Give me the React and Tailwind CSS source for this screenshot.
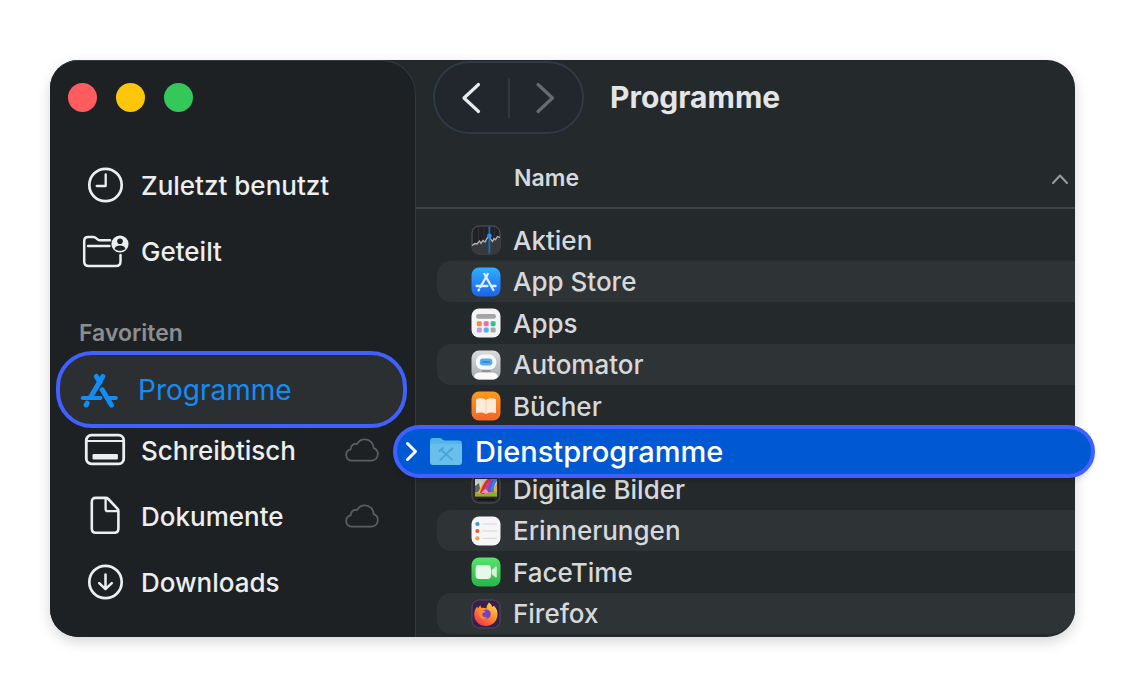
import React, { useState } from "react";

/* ---------- sidebar icons ---------- */

function ClockIcon() {
  return (
    <svg className="w-[50px] h-10 shrink-0" viewBox="0 0 50 40" fill="none" stroke="currentColor">
      <circle cx="25.5" cy="20" r="16.2" strokeWidth="2.7" />
      <path d="M25.7 9.5V21H16.7" strokeWidth="2.3" strokeLinecap="round" strokeLinejoin="round" />
    </svg>
  );
}

function SharedFolderIcon() {
  return (
    <svg className="w-[50px] h-10 shrink-0" viewBox="0 0 50 40" fill="none" stroke="currentColor">
      <path
        d="M30 9.2H19.5C17.2 9.2 16 6 13.5 6H8.2C5.5 6 4.2 7.4 4.2 10V30.5C4.2 33.6 5.6 35 8.7 35H36C39.1 35 40.5 33.6 40.5 30.5V24"
        strokeWidth="2.5"
        strokeLinecap="round"
      />
      <path d="M8 15H29.5" strokeWidth="2.4" strokeLinecap="round" />
      <circle cx="40" cy="13" r="8.6" fill="currentColor" stroke="none" />
      <circle cx="40" cy="10.3" r="2.8" fill="#1d2124" stroke="none" />
      <path d="M34.6 18C35.2 15.6 37.2 14.6 40 14.6S44.8 15.6 45.4 18C42.5 20.4 37.5 20.4 34.6 18Z" fill="#1d2124" stroke="none" />
    </svg>
  );
}

function ProgramsIcon() {
  return (
    <svg className="w-[50px] h-10 shrink-0" viewBox="0 0 50 40" fill="none" stroke="currentColor" strokeLinecap="round">
      <path d="M28.8 6.5L16.4 27.5M12.2 35L13.2 33.2" strokeWidth="5" />
      <path d="M22.4 6.5L26 12.4M28.2 19.8L37.4 35" strokeWidth="5" />
      <path d="M8.8 28H26.4M35.6 28H41.8" strokeWidth="4.2" />
    </svg>
  );
}

function DesktopIcon() {
  return (
    <svg className="w-[50px] h-10 shrink-0" viewBox="0 0 50 40" fill="none" stroke="currentColor">
      <rect x="6.3" y="5.2" width="37.4" height="28.6" rx="5" strokeWidth="2.8" />
      <path d="M7 11H43" strokeWidth="2" />
      <rect x="12.5" y="24" width="25.4" height="5.4" rx="1" fill="currentColor" stroke="none" />
    </svg>
  );
}

function DocumentIcon() {
  return (
    <svg className="w-[50px] h-10 shrink-0" viewBox="0 0 50 40" fill="none" stroke="currentColor" strokeWidth="2.6" strokeLinejoin="round">
      <path d="M15.8 1.9H25.6C26.8 1.9 27.5 2.2 28.3 3L37.4 12.6C38.2 13.4 38.4 14.1 38.4 15.2V32.6C38.4 35.6 37 36.8 34.4 36.8H15.8C13 36.8 11.8 35.6 11.8 32.6V6C11.8 3.2 13 1.9 15.8 1.9Z" />
      <path d="M25.6 2.6V13C25.6 14.4 26.2 15.2 27.8 15.2H38" strokeWidth="2.3" />
    </svg>
  );
}

function DownloadIcon() {
  return (
    <svg className="w-[50px] h-10 shrink-0" viewBox="0 0 50 40" fill="none" stroke="currentColor" strokeLinecap="round" strokeLinejoin="round">
      <circle cx="25.5" cy="20" r="16.2" strokeWidth="2.7" />
      <path d="M25.5 12.4V27M19.2 21.2L25.5 27.2L31.8 21.2" strokeWidth="2.5" />
    </svg>
  );
}

function CloudIcon() {
  return (
    <svg className="w-[34px] h-6 shrink-0 text-[#5b5e61]" viewBox="0 0 34 24" fill="none" stroke="currentColor" strokeWidth="1.8" strokeLinejoin="round">
      <path d="M7.4 22.6C3.6 22.6 1.2 20.2 1.2 17C1.2 14.2 3 12 5.7 11.4C5.5 7.6 8.8 5.2 12 6.2C13.6 3.2 16.4 1.4 19.8 1.4C24.8 1.4 28.6 5.2 28.7 10.2C31.2 11 32.8 13.2 32.8 16C32.8 19.8 30.2 22.6 26.4 22.6Z" />
    </svg>
  );
}

/* ---------- app icons ---------- */

function StocksIcon() {
  return (
    <svg className="size-[30px] shrink-0" viewBox="0 0 30 30" fill="none">
      <rect x="1" y="1" width="28" height="28" rx="7" fill="#222224" stroke="#55585b" />
      <path d="M7.5 2V28M13 2V28M23.5 2V28" stroke="#333336" strokeWidth="0.8" />
      <path d="M1 20.5L4 18.5L6 19L8.5 16L10 18.4L12 15.5L14 17L16.2 13L18 11.5L19.5 14L21.5 16.5L23 13.5L24.5 14.8L26.5 11.5L29 12.5V23C29 26.5 27 29 23 29H7C3 29 1 26.5 1 23Z" fill="#37393b" />
      <path d="M1 20.5L4 18.5L6 19L8.5 16L10 18.4L12 15.5L14 17L16.2 13L18 11.5L19.5 14L21.5 16.5L23 13.5L24.5 14.8L26.5 11.5L29 12.5" stroke="#b4b7b9" strokeWidth="1.3" />
      <path d="M18.4 1.5V28.5" stroke="#1272c4" strokeWidth="1.8" />
      <circle cx="18.4" cy="11" r="2.4" fill="#2492ee" />
    </svg>
  );
}

function AppStoreIcon() {
  return (
    <svg className="size-[30px] shrink-0" viewBox="0 0 30 30" fill="none">
      <defs>
        <linearGradient id="appstore" x1="0" y1="0" x2="0" y2="1">
          <stop stopColor="#2fb0fb" />
          <stop offset="1" stopColor="#1c62ee" />
        </linearGradient>
      </defs>
      <rect x="0.5" y="0.5" width="29" height="29" rx="7.5" fill="url(#appstore)" />
      <g stroke="#dcefff" strokeWidth="2.3" strokeLinecap="round">
        <path d="M16.8 7L9.4 20M7.6 23.2L8 22.5" />
        <path d="M13.4 7L22.4 23" />
        <path d="M5.6 19H16.4M21 19H24.6" />
      </g>
    </svg>
  );
}

function AppsIcon() {
  return (
    <svg className="size-[30px] shrink-0" viewBox="0 0 30 30">
      <rect x="0.5" y="0.5" width="29" height="29" rx="7.5" fill="#f4f4f5" />
      <rect x="5" y="6" width="20" height="4.8" rx="2.4" fill="#a2a4a5" />
      <rect x="5.8" y="13.2" width="5" height="5" rx="1.4" fill="#fb8a35" />
      <rect x="12.7" y="13.2" width="5" height="5" rx="1.4" fill="#ee6ba8" />
      <rect x="19.6" y="13.2" width="5" height="5" rx="1.4" fill="#27c299" />
      <rect x="5.8" y="19.6" width="5" height="5" rx="1.4" fill="#cf91ee" />
      <rect x="12.7" y="19.6" width="5" height="5" rx="1.4" fill="#54b2f0" />
      <rect x="19.6" y="19.6" width="5" height="5" rx="1.4" fill="#a5a8aa" />
    </svg>
  );
}

function AutomatorIcon() {
  return (
    <svg className="size-[30px] shrink-0" viewBox="0 0 30 30">
      <defs>
        <linearGradient id="automator" x1="0" y1="0" x2="0" y2="1">
          <stop stopColor="#dadcde" />
          <stop offset="1" stopColor="#a6a9ac" />
        </linearGradient>
      </defs>
      <rect x="0.5" y="0.5" width="29" height="29" rx="7.5" fill="url(#automator)" />
      <rect x="11" y="19" width="8.5" height="3.4" fill="#909396" />
      <rect x="4.8" y="4.6" width="20.6" height="15.2" rx="7.2" fill="#f7f8f9" />
      <rect x="8.8" y="8.6" width="12.6" height="6.8" rx="3" fill="#58aeea" />
      <rect x="11" y="11" width="8" height="2" rx="1" fill="#3b88cb" />
      <path d="M3 26.6C3.6 23.6 6 22.6 9 22.6H21C24 22.6 26.4 23.6 27 26.6C25.8 28.6 24.4 29.4 22 29.4H8C5.6 29.4 4.2 28.6 3 26.6Z" fill="#fafafa" />
    </svg>
  );
}

function BooksIcon() {
  return (
    <svg className="size-[30px] shrink-0" viewBox="0 0 30 30">
      <defs>
        <linearGradient id="books" x1="0" y1="0" x2="0" y2="1">
          <stop stopColor="#fb9a1c" />
          <stop offset="1" stopColor="#f5642a" />
        </linearGradient>
      </defs>
      <rect x="0.5" y="0.5" width="29" height="29" rx="7.5" fill="url(#books)" />
      <path d="M15 9C12.6 6.8 8 6.6 5 8.2V22.2C8.2 21.2 12 21.2 14.4 22.8H15.6C18 21.2 21.8 21.2 25 22.2V8.2C22 6.6 17.4 6.8 15 9Z" fill="#fdebd8" />
      <path d="M15 9V22.6" stroke="#f6c9a0" strokeWidth="0.9" />
    </svg>
  );
}

function ImageCaptureIcon() {
  return (
    <svg className="size-[30px] shrink-0" viewBox="0 0 30 30">
      <rect x="1" y="1" width="28" height="28" rx="7" fill="#29292b" stroke="#505356" />
      <path d="M4 5H26V22H4Z" fill="#cfd6da" />
      <path d="M4 12L8 9L10 20H4Z" fill="#5c6668" />
      <path d="M4 18H26V22.6H4Z" fill="#93ac2f" />
      <path d="M6 19C9 17 10 9 16 5H19C13 9 12 15 10 20Z" fill="#ecb925" />
      <path d="M8.5 19C11 15 12 9 17 5H20C15 9 15 14 13 20Z" fill="#d92f35" />
      <path d="M13 19C14 15 15 9 19 5H22C18 10 18 14 18 19Z" fill="#c93d9e" />
      <path d="M17 18C17 13 18 9 22 5H24C21 10 21 14 21 18Z" fill="#5d57d6" />
      <path d="M20 18C20 13 21 9 24 5H26V7C23 11 23 14 23 18Z" fill="#3787d8" />
      <path d="M23 18C23 14 24 11 26 9V18Z" fill="#e4a82c" />
      <path d="M10 19L14.5 14.5L18 19Z" fill="#ef8fc1" />
      <path d="M6 25.6H24" stroke="#111" strokeWidth="1.6" />
    </svg>
  );
}

function RemindersIcon() {
  return (
    <svg className="size-[30px] shrink-0" viewBox="0 0 30 30">
      <rect x="0.5" y="0.5" width="29" height="29" rx="7.5" fill="#f6f6f7" />
      <circle cx="6.4" cy="8" r="2.1" fill="#3d8ee8" />
      <circle cx="6.4" cy="15" r="2.1" fill="#e35843" />
      <circle cx="6.4" cy="22.3" r="2.1" fill="#fb9d3c" />
      <path d="M11.5 8H26M11.5 15H26M11.5 22.3H26" stroke="#d6d7d9" strokeWidth="1" />
    </svg>
  );
}

function FaceTimeIcon() {
  return (
    <svg className="size-[30px] shrink-0" viewBox="0 0 30 30">
      <defs>
        <linearGradient id="facetime" x1="0" y1="0" x2="0" y2="1">
          <stop stopColor="#57e46c" />
          <stop offset="1" stopColor="#27b648" />
        </linearGradient>
      </defs>
      <rect x="0.5" y="0.5" width="29" height="29" rx="7.5" fill="url(#facetime)" />
      <rect x="4.6" y="8" width="15.4" height="14" rx="3.4" fill="#e6f9e9" />
      <path d="M20.6 13.2L24.2 9.8C25 9.2 25.8 9.5 25.8 10.4V19.6C25.8 20.5 25 20.8 24.2 20.2L20.6 17Z" fill="#d3f4d9" />
    </svg>
  );
}

function FirefoxIcon() {
  return (
    <svg className="size-[30px] shrink-0" viewBox="0 0 30 30">
      <defs>
        <linearGradient id="firefox" x1="0.9" y1="0" x2="0.2" y2="1">
          <stop stopColor="#ffdf4a" />
          <stop offset="0.5" stopColor="#ff8a2a" />
          <stop offset="1" stopColor="#ee2f52" />
        </linearGradient>
      </defs>
      <rect x="1" y="1" width="28" height="28" rx="7" fill="#34204a" stroke="#594963" />
      <path d="M18 3.5C20 5 21 6.5 21.3 8L23 6.8C25.8 9.6 27 12.8 26.4 17C25.6 22.8 20.8 27 15 27C8.6 27 3.4 22.4 3.2 16C3.1 12.6 4.2 9.6 6.2 7.4L7 9.4L9.2 6.2L10.4 9C12 8.6 14 8.8 15.4 9.6C15.6 7 16.6 5 18 3.5Z" fill="url(#firefox)" />
      <circle cx="15.2" cy="15" r="4.5" fill="#7440c6" />
      <path d="M8.6 12C10.6 10.8 13 11.2 14.6 12.8C13.4 13.8 11.8 13.4 11.2 15C11 17.4 13.4 18.8 16 17.8C14.6 20.4 10.8 20.6 9 18C7.6 16 7.6 14 8.6 12Z" fill="#ff8a2c" />
    </svg>
  );
}

function UtilitiesFolderIcon() {
  return (
    <svg className="w-[34px] h-[30px] shrink-0" viewBox="0 0 34 30" fill="none">
      <path d="M1 4C1 2 2 1 4 1H10.5C13 1 13.4 3.4 15.6 3.4H30C32 3.4 33 4.4 33 6.4V12H1Z" fill="#52b5e8" />
      <path d="M1 8.5C1 7.4 1.8 6.8 3 6.8H31C32.2 6.8 33 7.4 33 8.5V25C33 27 32 28 30 28H4C2 28 1 27 1 25Z" fill="#68bfeb" />
      <path d="M12.4 13L23 22.6M21.6 13L11.4 22.8" stroke="#4aa6d8" strokeWidth="1.8" strokeLinecap="round" />
      <path d="M10.5 13.8L14 11.2M20.4 13.8L23.4 11.4" stroke="#4aa6d8" strokeWidth="2.2" strokeLinecap="round" />
    </svg>
  );
}

/* ---------- data ---------- */

const recentItems = [
  { name: "Zuletzt benutzt", Icon: ClockIcon },
  { name: "Geteilt", Icon: SharedFolderIcon },
];

const favorites = [
  { name: "Schreibtisch", Icon: DesktopIcon, cloud: true },
  { name: "Dokumente", Icon: DocumentIcon, cloud: true },
  { name: "Downloads", Icon: DownloadIcon },
];

const files = [
  { name: "Aktien", Icon: StocksIcon },
  { name: "App Store", Icon: AppStoreIcon },
  { name: "Apps", Icon: AppsIcon },
  { name: "Automator", Icon: AutomatorIcon },
  { name: "Bücher", Icon: BooksIcon },
  { name: "Dienstprogramme", Icon: UtilitiesFolderIcon, folder: true },
  { name: "Digitale Bilder", Icon: ImageCaptureIcon },
  { name: "Erinnerungen", Icon: RemindersIcon },
  { name: "FaceTime", Icon: FaceTimeIcon },
  { name: "Firefox", Icon: FirefoxIcon },
];

function SidebarItem({ item }) {
  const { name, Icon, cloud } = item;
  return (
    <li>
      <button className="flex items-center gap-[11px] w-full h-[66px] pl-[30px] pr-9 text-left">
        <Icon />
        <span className="flex-1">{name}</span>
        {cloud && <CloudIcon />}
      </button>
    </li>
  );
}

function Sidebar() {
  return (
    <aside className="w-[366px] shrink-0 pt-[22px] pb-[22px] bg-[#1d2124] border-t border-r border-[#2f3a43] rounded-l-[28px] rounded-tr-[34px] text-[26px] font-medium text-[#eceef0]">
      <div className="flex gap-[19px] pl-[18px] mb-10">
        <button aria-label="Schließen" className="size-[29px] rounded-full bg-[#ff5c60]" />
        <button aria-label="Minimieren" className="size-[29px] rounded-full bg-[#fcc70a]" />
        <button aria-label="Vergrößern" className="size-[29px] rounded-full bg-[#34c759]" />
      </div>

      <ul>
        {recentItems.map((item) => (
          <SidebarItem key={item.name} item={item} />
        ))}
      </ul>

      <h2 className="h-[67px] pt-[31px] pl-[29px] text-[23px] leading-9 font-semibold text-[#8b8e90]">
        Favoriten
      </h2>

      <ul>
        {/* highlighted entry, its ring is larger than the row */}
        <li className="relative h-[66px]">
          <button className="absolute top-0 left-1.5 right-2 h-[77px] flex items-center gap-[14px] pl-[14px] rounded-[36px] border-4 border-[#4060ff] bg-[#2b2f32] text-[28px] font-normal text-[#128df5]">
            <ProgramsIcon />
            Programme
          </button>
        </li>
        {favorites.map((item) => (
          <SidebarItem key={item.name} item={item} />
        ))}
      </ul>
    </aside>
  );
}

function FileRow({ file, index }) {
  const { name, Icon, folder } = file;

  if (folder) {
    return (
      <li className="relative h-[41px]">
        <button className="absolute -top-0.5 -left-[23px] -right-5 h-[53px] flex items-center rounded-full border-4 border-[#4060ff] bg-[#0059d2] pl-2 text-[29px] font-medium text-white shadow-md">
          <svg className="w-4 h-6" viewBox="0 0 16 24" fill="none" stroke="currentColor" strokeWidth="3" strokeLinecap="round" strokeLinejoin="round">
            <path d="M2.5 3.5L10.5 11.5L2.5 19.5" />
          </svg>
          <span className="ml-2 flex items-center gap-3">
            <Icon />
            {name}
          </span>
        </button>
      </li>
    );
  }

  return (
    <li
      className={
        index % 2 === 1
          ? "h-[41px] ml-[21px] pl-[34px] bg-[#2e3336] rounded-l-[14px] last:rounded-br-[24px]"
          : "h-[42px] ml-[21px] pl-[34px]"
      }
    >
      <button className="flex items-center gap-3 w-full h-full text-left">
        <Icon />
        {name}
      </button>
    </li>
  );
}

export default function App() {
  const [ascending, setAscending] = useState(true);

  return (
    <div className="min-h-screen bg-white px-[50px] py-[60px] font-['Inter',sans-serif]">
      <div className="flex rounded-[28px] bg-[#24292c] shadow-[0_5px_14px_rgba(0,0,0,0.16)]">
        <Sidebar />

        <main className="flex-1 min-w-0 text-[#d6d9db]">
          <header className="flex items-center gap-[26px] pl-[17px] pt-px">
            <div className="flex items-center h-[73px] w-[151px] rounded-full border-2 border-[#2e3b47] bg-[#21272c]">
              <button aria-label="Zurück" className="flex-1 flex justify-center text-[#e8eaec]">
                <svg className="w-6 h-8" viewBox="0 0 24 32" fill="none" stroke="currentColor" strokeWidth="3.2" strokeLinecap="round" strokeLinejoin="round">
                  <path d="M19.5 2.5L5 16L19.5 29.5" />
                </svg>
              </button>
              <span className="w-0.5 h-10 bg-[#34383b]" />
              <button aria-label="Vorwärts" className="flex-1 flex justify-center text-[#686b6d]">
                <svg className="w-6 h-8" viewBox="0 0 24 32" fill="none" stroke="currentColor" strokeWidth="3.2" strokeLinecap="round" strokeLinejoin="round">
                  <path d="M4 2.5L18.5 16L4 29.5" />
                </svg>
              </button>
            </div>
            <h1 className="text-[30px] font-bold text-[#e3e5e7]">Programme</h1>
          </header>

          <button
            className="flex items-center justify-between w-full h-[75px] pt-4 pl-[98px] pr-1.5 border-b-2 border-[#3c4144] text-[23px] font-semibold"
            onClick={() => setAscending(!ascending)}
          >
            Name
            <svg
              className={ascending ? "w-[18px] h-3" : "w-[18px] h-3 rotate-180"}
              viewBox="0 0 18 12"
              fill="none"
              stroke="#9a9d9f"
              strokeWidth="2"
              strokeLinecap="round"
              strokeLinejoin="round"
            >
              <path d="M2 10L9 2.5L16 10" />
            </svg>
          </button>

          <ul className="pt-2.5 text-[26px] font-medium">
            {files.map((file, index) => (
              <FileRow key={file.name} file={file} index={index} />
            ))}
          </ul>
        </main>
      </div>
    </div>
  );
}
